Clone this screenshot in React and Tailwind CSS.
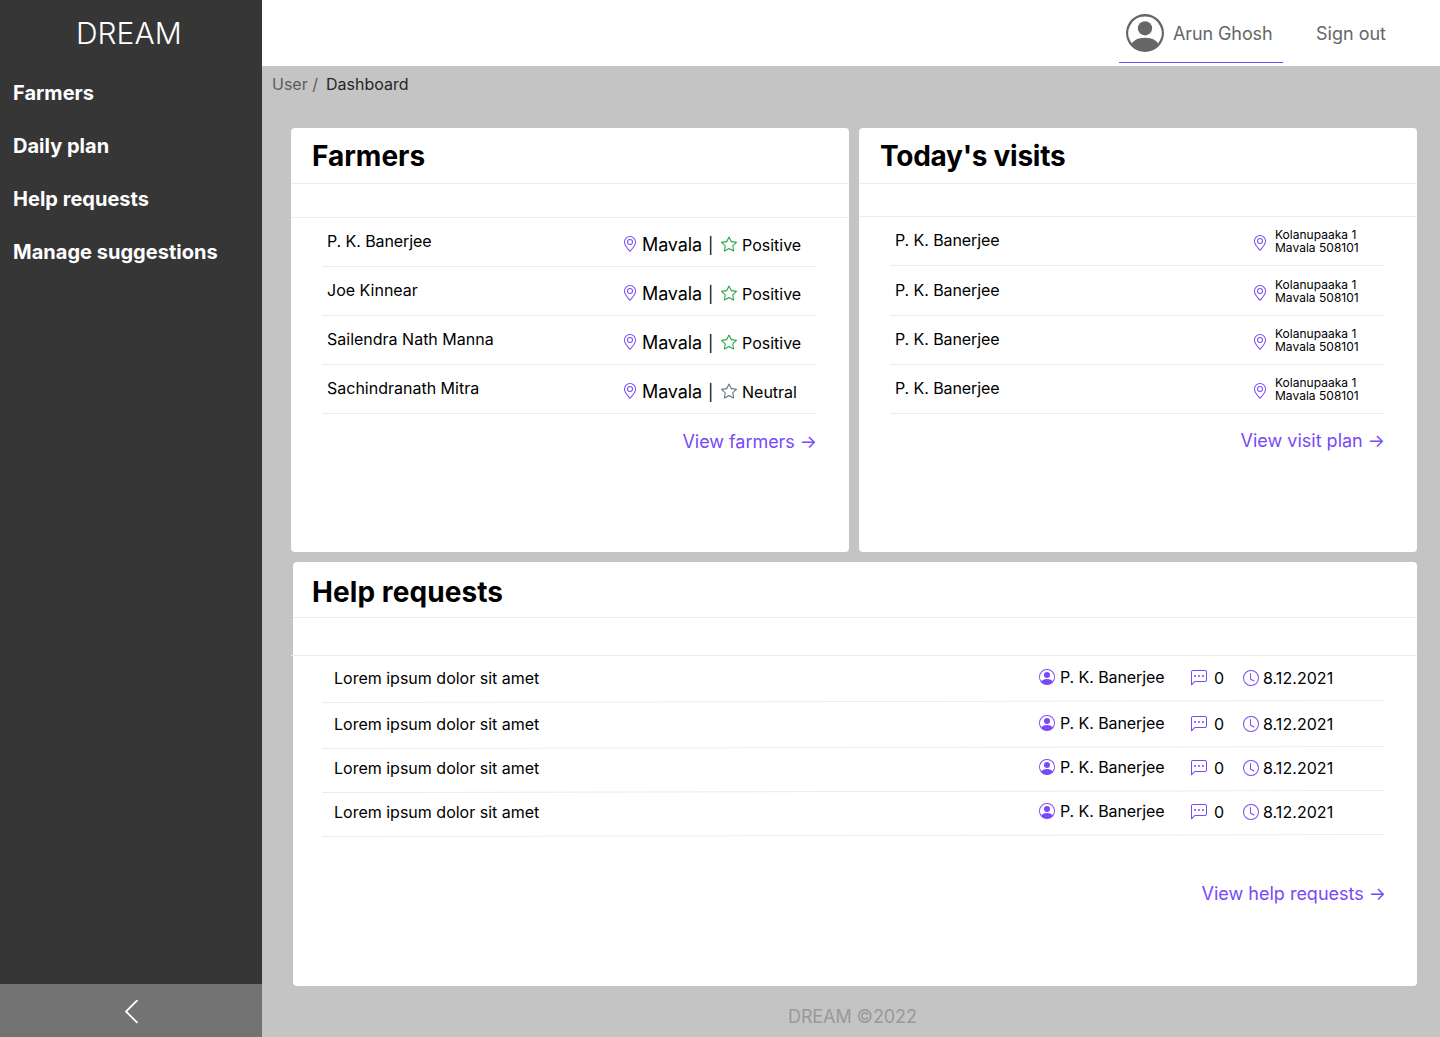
import { BsGeoAlt, BsStar, BsPersonCircle, BsChatLeftDots, BsClock, BsChevronLeft } from "react-icons/bs";

const navItems = ["Farmers", "Daily plan", "Help requests", "Manage suggestions"];

const farmers = [
  { name: "P. K. Banerjee", status: "Positive" },
  { name: "Joe Kinnear", status: "Positive" },
  { name: "Sailendra Nath Manna", status: "Positive" },
  { name: "Sachindranath Mitra", status: "Neutral" },
];

const visits = ["h-[49px]", "h-[50px] pt-px", "h-[49px]", "h-[49px]"];

const requests = [
  { row: "h-[46px]", content: "h-[45px]" },
  { row: "h-[46px]", content: "h-[45px]" },
  { row: "h-11", content: "-mt-[2px] h-[45px]" },
  { row: "h-11", content: "-mt-[2px] h-[45px]" },
];

function Sidebar() {
  return (
    <aside className="flex w-[262px] shrink-0 flex-col bg-[#363636] text-white">
      <div className="flex h-[66px] items-center pb-px pl-[76px] text-[30px] leading-none font-light">DREAM</div>
      <nav className="flex flex-1 flex-col pt-px">
        {navItems.map((item) => (
          <a key={item} className="h-[53px] pl-[13px] text-xl leading-[53px] font-bold tracking-[0.02px]">
            {item}
          </a>
        ))}
      </nav>
      <button className="flex h-[53px] items-center justify-center bg-[#737373] pt-px">
        <BsChevronLeft className="size-[29px]" />
      </button>
    </aside>
  );
}

function Header() {
  return (
    <header className="flex h-[66px] shrink-0 bg-white pl-[857px] text-lg text-[#666666]">
      <div className="flex h-[63px] w-[164px] items-center border-b border-[#7749f8] pt-1 pl-[7px]">
        <BsPersonCircle className="size-[38px]" />
        <span className="pt-px pl-[9px] tracking-[-0.1px]">Arun Ghosh</span>
      </div>
      <a className="pl-[33px] leading-[67px]">Sign out</a>
    </header>
  );
}

function ViewLink({ children, className }) {
  return <a className={`flex justify-end text-lg leading-7 text-[#7749f8] ${className}`}>{children} →</a>;
}

function FarmersCard() {
  return (
    <section className="h-[424px] w-[558px] rounded bg-white">
      <h2 className="h-14 border-b border-[#ebebeb] pl-[21px] text-[28px] leading-14 font-bold">Farmers</h2>
      <div className="h-[34px] border-b border-[#ebebeb]" />
      <ul className="ml-[31px] w-[495px]">
        {farmers.map((f) => (
          <li key={f.name} className="flex h-[49px] border-b border-[#ebebeb] pl-[5px]">
            <span className={`w-[295px] shrink-0 leading-[47px] ${f.name === "P. K. Banerjee" ? "tracking-[-0.08px]" : ""}`}>
              {f.name}
            </span>
            <div className="flex h-[54px] items-center">
              <BsGeoAlt className="mb-[2px] size-4 shrink-0 text-[#7749f8]" />
              <span className="w-[70px] shrink-0 pl-1 text-lg tracking-[-0.12px]">Mavala</span>
              <span className="w-[13px] shrink-0 text-base">|</span>
              <BsStar
                className={`mb-[2px] size-4 shrink-0 ${f.status === "Positive" ? "text-[#28a745]" : "text-[#6c757d]"}`}
              />
              <span className="pl-[5px]">{f.status}</span>
            </div>
          </li>
        ))}
      </ul>
      <ViewLink className="mt-[14px] pr-8 tracking-[-0.04px]">View farmers</ViewLink>
    </section>
  );
}

function VisitsCard() {
  return (
    <section className="h-[424px] w-[558px] rounded bg-white">
      <h2 className="h-14 border-b border-[#ebebeb] pl-[21px] text-[28px] leading-14 font-bold tracking-[-0.25px]">
        Today's visits
      </h2>
      <div className="h-[33px] border-b border-[#ebebeb]" />
      <ul className="ml-[31px] w-[495px]">
        {visits.map((spacing, i) => (
          <li key={i} className={`flex border-b border-[#ebebeb] pl-[5px] ${spacing}`}>
            <span className="w-[357px] leading-[47px] tracking-[-0.08px]">P. K. Banerjee</span>
            <BsGeoAlt className="mt-[18px] size-4 text-[#7749f8]" />
            <address className="pt-[11px] pl-[7px] text-xs leading-[13px] tracking-[0.02px] not-italic">
              Kolanupaaka 1
              <br />
              Mavala 508101
            </address>
          </li>
        ))}
      </ul>
      <ViewLink className="mt-[13px] pr-8">View visit plan</ViewLink>
    </section>
  );
}

function HelpCard() {
  return (
    <section className="mt-[10px] ml-[2px] h-[424px] w-[1124px] rounded bg-white">
      <h2 className="h-14 border-b border-[#ebebeb] pl-[19px] text-[28px] leading-[60px] font-bold tracking-[0.08px]">
        Help requests
      </h2>
      <div className="-ml-[2px] h-[38px] border-b border-[#ebebeb]" />
      <ul className="ml-[29px] w-[1063px]">
        {requests.map((r, i) => (
          <li key={i} className={`flex flex-col ${r.row}`}>
            <div className={`flex shrink-0 pl-3 ${r.content}`}>
              <span className="w-[705px] leading-[44px]">Lorem ipsum dolor sit amet</span>
              <BsPersonCircle className="mt-[13px] size-4 text-[#7749f8]" />
              <span className="w-[136px] pl-[5px] leading-[42px] tracking-[-0.08px]">P. K. Banerjee</span>
              <BsChatLeftDots className="mt-[14px] size-4 text-[#7749f8]" />
              <span className="w-9 pl-[7px] leading-[44px]">0</span>
              <BsClock className="mt-[14px] size-4 text-[#7749f8]" />
              <span className="pl-1 leading-[44px] tracking-[0.05px]">8.12.2021</span>
            </div>
            <div className="h-px shrink-0 rotate-[-0.108deg] bg-[#ebebeb]" />
          </li>
        ))}
      </ul>
      <ViewLink className="mt-11 pr-[31px]">View help requests</ViewLink>
    </section>
  );
}

export default function App() {
  return (
    <div className="flex h-[1037px] w-[1440px] overflow-hidden bg-[#c4c4c4] font-['Inter',sans-serif] text-base text-black">
      <Sidebar />
      <div className="flex flex-1 flex-col">
        <Header />
        <div className="flex h-[62px] shrink-0 gap-2 pl-[10px] leading-[37px]">
          <span className="text-[#5c5c5c]">User /</span>
          <span className="text-[#262626]">Dashboard</span>
        </div>
        <main className="shrink-0 pl-[29px]">
          <div className="flex gap-[10px]">
            <FarmersCard />
            <VisitsCard />
          </div>
          <HelpCard />
        </main>
        <footer className="h-[51px] pl-[526px] text-lg leading-[61px] tracking-[-0.1px] text-[#999999]">
          DREAM ©2022
        </footer>
      </div>
    </div>
  );
}
